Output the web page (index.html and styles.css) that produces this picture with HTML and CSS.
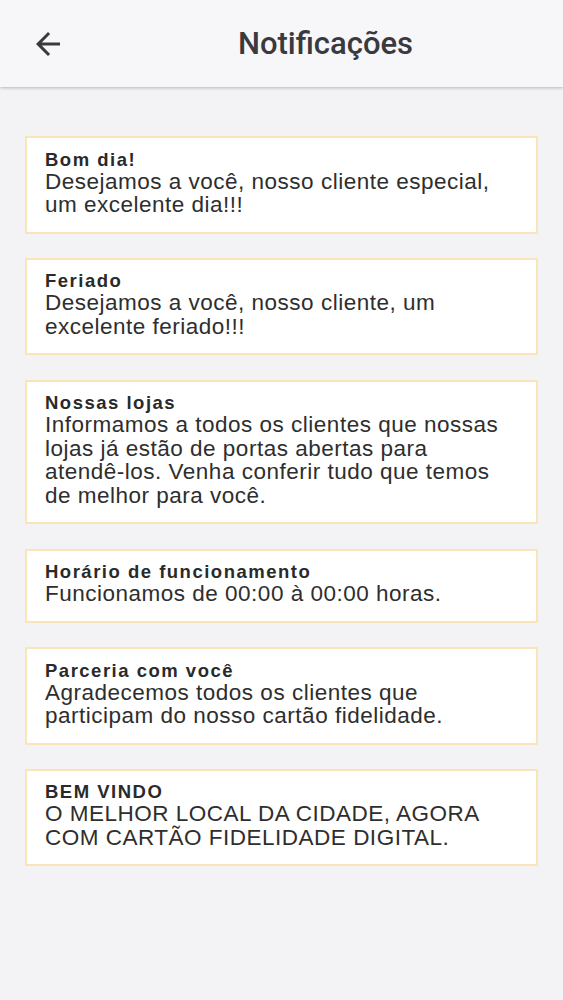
FILE: index.html
```html
<!DOCTYPE html>
<html lang="pt">
<head>
<meta charset="utf-8">
<title>Notificações</title>
<link rel="stylesheet" href="styles.css">
</head>
<body>
<header class="appbar">
  <div class="lead">
    <svg class="back" viewBox="0 0 24 24" width="36" height="36"><path d="M20 11H7.83l5.59-5.59L12 4l-8 8 8 8 1.41-1.41L7.83 13H20v-2z" fill="#3a393e"/></svg>
  </div>
  <h1 class="title">Notificações</h1>
</header>
<main class="list">
  <div class="card"><div class="card-title">Bom dia!</div><div class="card-body">Desejamos a você, nosso cliente especial, um excelente dia!!!</div></div>
  <div class="card"><div class="card-title">Feriado</div><div class="card-body">Desejamos a você, nosso cliente, um excelente feriado!!!</div></div>
  <div class="card"><div class="card-title">Nossas lojas</div><div class="card-body">Informamos a todos os clientes que nossas lojas já estão de portas abertas para atendê-los. Venha conferir tudo que temos de melhor para você.</div></div>
  <div class="card"><div class="card-title">Horário de funcionamento</div><div class="card-body">Funcionamos de 00:00 à 00:00 horas.</div></div>
  <div class="card"><div class="card-title">Parceria com você</div><div class="card-body">Agradecemos todos os clientes que participam do nosso cartão fidelidade.</div></div>
  <div class="card"><div class="card-title">BEM VINDO</div><div class="card-body">O MELHOR LOCAL DA CIDADE, AGORA COM CARTÃO FIDELIDADE DIGITAL.</div></div>
</main>
</body>
</html>
```
FILE: styles.css
```css
html, body {
  margin: 0;
  padding: 0;
  background: #f3f2f5;
  min-height: 1000px;
}
body {
  font-family: "Liberation Sans", Arial, sans-serif;
  color: #2b2b2b;
}
.appbar {
  display: flex;
  align-items: center;
  height: 87px;
  background: #f7f6f9;
  box-shadow: 0 1px 3px rgba(0,0,0,0.25);
  position: relative;
}
.lead {
  width: 88px;
  display: flex;
  align-items: center;
  padding-left: 30px;
  box-sizing: border-box;
}
.back { display: block; }
.title {
  flex: 1;
  margin: 0;
  text-align: center;
  font-family: Roboto, "Noto Sans", sans-serif;
  font-weight: 500;
  font-size: 31px;
  line-height: 36px;
  color: #3a393e;
}
.list {
  display: flex;
  flex-direction: column;
  gap: 24.4px;
  padding: 49px 25px 0 25px;
}
.card {
  background: #fff;
  border: 2px solid #fae5b8;
  padding: 11.5px 28px 15px 18px;
}
.card-title {
  font-weight: bold;
  font-size: 18.5px;
  line-height: 20px;
  letter-spacing: 1.5px;
  color: #2a2a2a;
}
.card-body {
  font-size: 22.5px;
  line-height: 23.5px;
  letter-spacing: 0.5px;
  color: #2e2e2e;
}
```
